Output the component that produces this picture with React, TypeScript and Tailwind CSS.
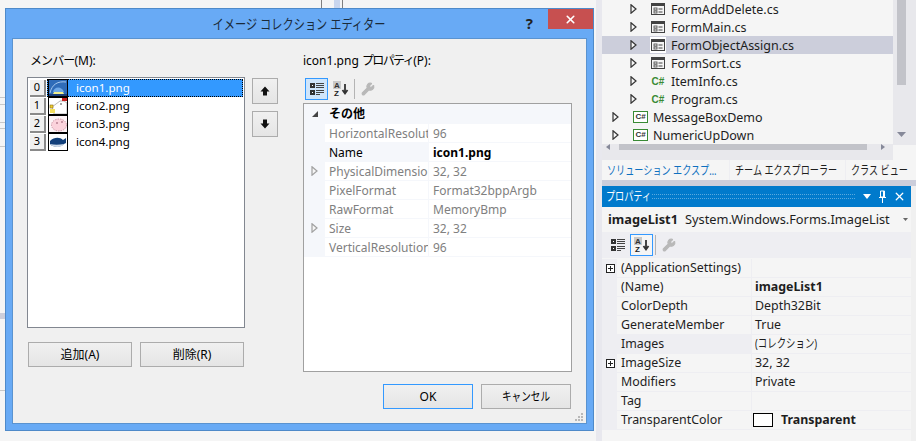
import type { ReactNode } from "react";
import { X, Wrench } from "lucide-react";

const font = { fontFamily: '"Noto Sans", "Noto Sans CJK JP", sans-serif' };

// Meiryo UI's kana are narrow, so squeeze them
function Kana({ children }: { children: ReactNode }) {
  return <span className="inline-block whitespace-nowrap origin-left scale-x-[0.76]">{children}</span>;
}

function CategoryIcon() {
  return (
    <svg width="16" height="16" viewBox="0 0 16 16">
      <rect x="1" y="2" width="5" height="5" fill="#333" />
      <rect x="3" y="4" width="1" height="1" fill="#fff" />
      <rect x="1" y="9" width="5" height="5" fill="#333" />
      <rect x="3" y="11" width="1" height="1" fill="#fff" />
      <path d="M7 2.5h8M7 4.5h8M7 6.5h8M7 9.5h8M7 11.5h8M7 13.5h4" stroke="#444" strokeWidth="1" />
    </svg>
  );
}

function SortIcon() {
  return (
    <svg width="17" height="16" viewBox="0 0 17 16">
      <rect x="1" y="0" width="8" height="8" fill="#c8c8c8" />
      <text x="2" y="7" fontSize="8" fontWeight="700" fill="#333" fontFamily="Liberation Sans">A</text>
      <text x="2" y="15" fontSize="8" fontWeight="700" fill="#222" fontFamily="Liberation Sans">Z</text>
      <path d="M13 3v9M10.5 9l2.5 3.5L15.5 9" stroke="#333" strokeWidth="1.8" fill="none" />
    </svg>
  );
}

function Toolbar({ active }: { active: "cat" | "az" }) {
  const on = "bg-[#cfe5fb] border border-[#3399ff]";
  const on2 = "bg-[#f5f5f5] border border-[#3399ff]";
  return (
    <div className="flex items-center h-[24px]">
      <div className={`w-[23px] h-[22px] flex items-center justify-center ${active === "cat" ? on : ""}`}>
        <CategoryIcon />
      </div>
      <div className={`w-[23px] h-[22px] ml-[1px] flex items-center justify-center ${active === "az" ? on2 : ""}`}>
        <SortIcon />
      </div>
      <div className="w-px h-[20px] bg-[#b4b4b4] ml-[2px]" />
      <Wrench size={14} className="ml-[6px] text-[#b8b8b8]" fill="#b8b8b8" />
    </div>
  );
}

function Arrow({ color = "#333" }: { color?: string }) {
  return (
    <svg width="7" height="10" viewBox="0 0 7 10">
      <path d="M1 .8 6 5 1 9.2Z" fill="#f5f5f5" stroke={color} strokeWidth="1.2" />
    </svg>
  );
}

function PlusBox() {
  return (
    <span className="w-[9px] h-[9px] border border-[#222] flex items-center justify-center relative bg-white">
      <span className="w-[5px] h-px bg-[#222]" />
      <span className="w-px h-[5px] bg-[#222] absolute" />
    </span>
  );
}

function Thumb({ n }: { n: number }) {
  return (
    <svg width="20" height="18" viewBox="0 0 18 16" className="border border-black shrink-0" style={{ background: n === 0 ? "#2f6cb8" : "#fff" }}>
      {n === 0 && (
        <>
          <path d="M1 13C3 4 9 1 17 2" stroke="#a5c8ee" fill="none" />
          <path d="M4 12c1-6 9-6 11 0Z" fill="#6fa8e6" />
          <path d="M5 12h9l1 2H4Z" fill="#f0ee8c" />
          <rect x="0" y="14" width="18" height="2" fill="#1c3f78" />
        </>
      )}
      {n === 1 && (
        <>
          <path d="M3 9 11 3l4 0 3 2v11H5Z" fill="#fff" stroke="#999" strokeWidth=".7" />
          <rect x="13" y="0" width="5" height="3" fill="#c62020" />
          <rect x="1" y="7" width="3" height="3" fill="#f0d030" stroke="#8a6a10" strokeWidth=".6" />
          <rect x="1" y="11" width="5" height="4" fill="#f4e060" />
          <circle cx="12" cy="6" r=".8" fill="#333" />
        </>
      )}
      {n === 2 && (
        <>
          <rect width="18" height="16" fill="#fdf3f6" />
          <ellipse cx="10" cy="9" rx="7.5" ry="6" fill="#fbd3dc" stroke="#b87a8a" strokeWidth=".7" strokeDasharray="1.5 1" />
          <circle cx="8" cy="7" r=".8" fill="#8a4a60" />
          <circle cx="13" cy="6" r=".8" fill="#8a4a60" />
        </>
      )}
      {n === 3 && (
        <>
          <path d="M1 7c4-4 10-4 13-1l3-2v5l-2 1c-2 3-11 4-14 0Z" fill="#123f7a" />
          <path d="M1 10c4 1 9 1 14 0-2 4-11 4-14 0Z" fill="#cfdae8" />
        </>
      )}
    </svg>
  );
}

function WinButton({ children, className = "border-[#acacac]" }: { children: ReactNode; className?: string }) {
  return (
    <div className={`w-[90px] h-[25px] border bg-gradient-to-b from-[#f0f0f0] to-[#e5e5e5] flex items-center justify-center text-[12px] text-black ${className}`}>
      {children}
    </div>
  );
}

function MoveButton({ down }: { down?: boolean }) {
  return (
    <div className="w-[26px] h-[26px] border border-[#acacac] bg-gradient-to-b from-[#f0f0f0] to-[#e5e5e5] flex items-center justify-center">
      <svg width="10" height="10" viewBox="0 0 10 10" className={down ? "rotate-180" : ""}>
        <path d="M5 .5 9.5 5.5H7V9.5H3V5.5H.5Z" fill="#111" />
      </svg>
    </div>
  );
}

const members = ["icon1.png", "icon2.png", "icon3.png", "icon4.png"];

function MemberList() {
  return (
    <div className="w-[218px] h-[251px] border border-[#828790] bg-white pt-[1px] pl-[1px]">
      {members.map((name, i) => (
        <div key={name} className="flex h-[18px] items-center">
          <div className="w-[16px] h-[17px] ml-[1px] bg-[#f0f0f0] border-r-2 border-b-2 border-[#8a8a8a] flex items-center justify-center text-[11px] text-black shrink-0">
            {i}
          </div>
          <div className={`flex-1 h-[18px] ml-[1px] mr-[1px] flex items-center pl-[1px] ${i === 0 ? "bg-[#3399ff] text-white outline-1 outline-dotted outline-black -outline-offset-1" : "text-black"}`}>
            <Thumb n={i} />
            <span className="ml-[8px] text-[11.6px] leading-none">{name}</span>
          </div>
        </div>
      ))}
    </div>
  );
}

const imageProps: [string, string, boolean?][] = [
  ["HorizontalResolution", "96"],
  ["Name", "icon1.png"],
  ["PhysicalDimension", "32, 32", true],
  ["PixelFormat", "Format32bppArgb"],
  ["RawFormat", "MemoryBmp"],
  ["Size", "32, 32", true],
  ["VerticalResolution", "96"],
];

function ImagePropGrid() {
  return (
    <div className="w-[269px] h-[269px] border border-[#a0a0a0] bg-white mt-[1px]">
      <div className="h-[20px] bg-[#f5f7fb] flex items-center text-[12px] font-bold text-black">
        <svg width="6" height="6" viewBox="0 0 6 6" className="ml-[8px]">
          <path d="M6 0V6H0Z" fill="#444" />
        </svg>
        <span className="ml-[11px]">その他</span>
      </div>
      {imageProps.map(([k, v, expand]) => {
        const isName = k === "Name";
        return (
          <div key={k} className="h-[19px] flex border-b border-[#f5f7fb] text-[12px] leading-[20px]">
            <div className="w-[21px] bg-[#f5f7fb] flex items-center justify-center shrink-0">
              {expand && <Arrow color="#a0a0a0" />}
            </div>
            <div className={`w-[104px] overflow-hidden whitespace-nowrap pl-[4px] border-r border-[#f5f7fb] ${isName ? "bg-[#f5f7fb] text-black" : "text-[#808080]"}`}>
              {k}
            </div>
            <div className={`pl-[4px] ${isName ? "font-bold text-black" : "text-[#808080]"}`}>{v}</div>
          </div>
        );
      })}
    </div>
  );
}

function ResizeGrip() {
  return (
    <svg width="9" height="9" viewBox="0 0 9 9" className="absolute right-[2px] bottom-[1px]">
      <path d="M6 0h2v2H6ZM3 3h2v2H3ZM6 3h2v2H6ZM0 6h2v2H0ZM3 6h2v2H3ZM6 6h2v2H6Z" fill="#b8b8b8" />
    </svg>
  );
}

function Dialog() {
  return (
    <div className="absolute left-[5px] top-[8px] w-[589px] h-[423px] border border-[#4f8ac9] bg-[#68aaf5] flex flex-col px-[6px] pb-[6px]">
      <div className="h-[29px] relative flex items-center justify-center text-[14px] text-[#1a2a3a] shrink-0">
        <span className="inline-block whitespace-nowrap scale-x-[0.8]">イメージ コレクション エディター</span>
        <span className="absolute right-[54px] top-[3px] text-[15px] font-bold text-[#222]">?</span>
        <div className="absolute -right-[6px] top-0 w-[45px] h-[20px] bg-[#c75050] flex items-center justify-center">
          <X size={13} strokeWidth={3} className="text-white" />
        </div>
      </div>
      <div className="flex-1 relative border border-[#5a93d0] bg-[#f0f0f0] flex pl-[14px] pt-[14px]">
        <div className="w-[218px] shrink-0">
          <div className="h-[24px] pl-[3px] text-[12px] leading-[16px] text-black">
            <span className="tracking-[-0.9px]">メンバー</span>(M):
          </div>
          <MemberList />
          <div className="flex mt-[14px] pl-[1px] gap-[8px]">
            <WinButton className="w-[104px] border-[#acacac]">追加(A)</WinButton>
            <WinButton className="w-[104px] border-[#acacac]">削除(R)</WinButton>
          </div>
        </div>
        <div className="ml-[7px] w-[26px] shrink-0 pt-[25px] flex flex-col gap-[7px]">
          <MoveButton />
          <MoveButton down />
        </div>
        <div className="ml-[25px] w-[269px] shrink-0">
          <div className="h-[24px] text-[12px] leading-[16px] text-black">
            icon1.png <span className="tracking-[-1.6px]">プロパティ</span>(P):
          </div>
          <div className="pl-[2px]">
            <Toolbar active="cat" />
          </div>
          <div className="pt-px">
            <ImagePropGrid />
          </div>
          <div className="flex justify-end gap-[8px] mt-[12px] pr-[1px]">
            <WinButton className="border-[#3399ff]">OK</WinButton>
            <WinButton>
              <span className="inline-block whitespace-nowrap scale-x-[0.8]">キャンセル</span>
            </WinButton>
          </div>
        </div>
        <ResizeGrip />
      </div>
    </div>
  );
}

function FormIcon() {
  return (
    <svg width="14" height="12" viewBox="0 0 14 12">
      <rect x=".5" y=".5" width="13" height="11" fill="#f5f5f5" stroke="#424242" />
      <rect x="1" y="1" width="12" height="2" fill="#424242" />
      <rect x="3" y="5" width="3" height="2" fill="none" stroke="#424242" strokeWidth=".8" />
      <rect x="3" y="8" width="3" height="2" fill="none" stroke="#424242" strokeWidth=".8" />
      <path d="M7.5 6h4M7.5 9h4" stroke="#424242" />
    </svg>
  );
}

const tree: { name: string; kind: "form" | "cs" | "proj"; selected?: boolean }[] = [
  { name: "FormAddDelete.cs", kind: "form" },
  { name: "FormMain.cs", kind: "form" },
  { name: "FormObjectAssign.cs", kind: "form", selected: true },
  { name: "FormSort.cs", kind: "form" },
  { name: "ItemInfo.cs", kind: "cs" },
  { name: "Program.cs", kind: "cs" },
  { name: "MessageBoxDemo", kind: "proj" },
  { name: "NumericUpDown", kind: "proj" },
];

function SolutionTree() {
  return (
    <div className="flex h-[160px]">
      <div className="w-[291px] shrink-0 bg-[#f5f5f5] h-full flex flex-col">
        <div className="flex-1 overflow-hidden">
          {tree.map((t) => (
            <div key={t.name} className={`h-[18px] flex items-center text-[12.5px] text-[#1e1e1e] ${t.selected ? "bg-[#cccedb]" : ""} ${t.kind === "proj" ? "pl-[10px]" : "pl-[28px]"}`}>
              <Arrow />
              {t.kind === "form" && (
                <span className={`ml-[13px] w-[16px] h-[16px] flex items-center justify-center ${t.selected ? "bg-white" : ""}`}>
                  <FormIcon />
                </span>
              )}
              {t.kind === "cs" && (
                <span className="ml-[13px] w-[16px] h-[16px] flex items-center justify-center text-[10px] font-bold text-[#388a34]" style={{ fontFamily: "Liberation Sans" }}>
                  C#
                </span>
              )}
              {t.kind === "proj" && (
                <span className="ml-[14px] w-[15px] h-[12px] border border-[#388a34] flex items-center justify-center text-[8px] font-bold text-[#333] bg-white" style={{ fontFamily: "Liberation Sans" }}>
                  C#
                </span>
              )}
              <span className="pt-[2px] ml-[5px]">{t.name}</span>
            </div>
          ))}
        </div>
        <div className="h-[16px] bg-[#e8e8ec] flex items-start pl-[4px]">
          <div className="h-[6px] flex items-center w-full">
            <svg width="4" height="6" viewBox="0 0 4 6"><path d="M4 0V6L0 3Z" fill="#868999" /></svg>
            <div className="ml-[9px] w-[248px] h-[6px] bg-[#c2c3c9]" />
            <svg width="4" height="6" viewBox="0 0 4 6" className="ml-[14px]"><path d="M0 0V6L4 3Z" fill="#868999" /></svg>
          </div>
        </div>
      </div>
      <div className="flex-1 bg-[#e8e8ec] h-[145px] relative">
        <div className="ml-[4px] w-[9px] h-[85px] bg-[#c2c3c9]" />
        <svg width="9" height="5" viewBox="0 0 9 5" className="absolute left-[4px] top-[132px]"><path d="M0 0H9L4.5 5Z" fill="#868999" /></svg>
      </div>
    </div>
  );
}

const settings: [string, string, "plus"?, "bold"?][] = [
  ["(ApplicationSettings)", "", "plus"],
  ["(Name)", "imageList1", undefined, "bold"],
  ["ColorDepth", "Depth32Bit"],
  ["GenerateMember", "True"],
  ["Images", "(コレクション)"],
  ["ImageSize", "32, 32", "plus"],
  ["Modifiers", "Private"],
  ["Tag", ""],
];

function SettingRow({ name, children, plus, hot }: { name: string; children?: ReactNode; plus?: boolean; hot?: boolean }) {
  return (
    <div className="h-[19px] flex text-[12.4px] leading-[18px] text-[#1e1e1e]">
      <div className="w-[15px] shrink-0 bg-[#eeeef2] flex items-center pl-[4px]">{plus && <PlusBox />}</div>
      <div className={`w-[135px] shrink-0 pl-[4px] border-r border-b border-[#eeeef2] ${hot ? "bg-[#eeeef2]" : ""}`}>{name}</div>
      <div className="flex-1 pl-[3px] border-b border-[#eeeef2] flex items-center h-[19px] pb-px">{children}</div>
    </div>
  );
}

function PropertiesPanel() {
  return (
    <div className="h-[255px] flex flex-col pr-[5px] bg-[#f0f0f0]">
      <div className="h-[21px] bg-[#007acc] flex items-center text-white text-[12px] pl-[4px] pr-[5px] shrink-0">
        <span className="w-[46px] shrink-0"><Kana>プロパティ</Kana></span>
        <div className="flex-1 h-[5px] mr-[8px] border-y border-dotted border-[#5aa9de]" />
        <svg width="8" height="5" viewBox="0 0 8 5"><path d="M0 0H8L4 5Z" fill="#fff" /></svg>
        <svg width="9" height="13" viewBox="0 0 9 13" className="ml-[7px]">
          <path d="M2.5 1h4v6h-4ZM1 7.5h7M4.5 8v5M5.5 1v6" stroke="#fff" fill="none" />
        </svg>
        <X size={13} strokeWidth={2.4} className="ml-[6px]" />
      </div>
      <div className="h-[25px] bg-[#f5f5f5] flex items-center text-[12.8px] pl-[6px] pr-[3px] text-[#1e1e1e] shrink-0 whitespace-nowrap">
        <span className="font-bold mr-[7px]">imageList1</span>
        <span>System.Windows.Forms.ImageList</span>
        <svg width="5" height="3" viewBox="0 0 5 3" className="ml-auto"><path d="M0 0H5L2.5 3Z" fill="#666" /></svg>
      </div>
      <div className="bg-[#eeeef2] pl-[4px] h-[26px] flex items-center shrink-0">
        <Toolbar active="az" />
      </div>
      <div className="flex-1 bg-[#f5f5f5] pt-px">
        {settings.map(([k, v, plus, bold]) => (
          <SettingRow key={k} name={k} plus={plus === "plus"} hot={k === "Images"}>
            {k === "Images" ? <Kana>{v}</Kana> : <span className={bold ? "font-bold" : ""}>{v}</span>}
          </SettingRow>
        ))}
        <SettingRow name="TransparentColor">
          <span className="w-[20px] h-[14px] -ml-[2px] border border-black bg-white shrink-0" />
          <span className="ml-[8px] font-bold">Transparent</span>
        </SettingRow>
      </div>
    </div>
  );
}

function SidePanels() {
  return (
    <div className="w-[314px] shrink-0 h-[441px] flex flex-col">
      <SolutionTree />
      <div className="h-[20px] flex text-[12px] leading-[21px] text-[#1e1e1e] shrink-0 pr-[7px] bg-[#eeeef2]">
        <div className="w-[127px] bg-[#f5f5f5] text-[#0e70c0] pl-[5px]"><Kana>ソリューション エクスプ…</Kana></div>
        <div className="w-[115px] ml-px pl-[5px] bg-[#f5f5f5]"><Kana>チーム エクスプローラー</Kana></div>
        <div className="flex-1 ml-px pl-[5px] bg-[#f5f5f5]"><Kana>クラス ビュー</Kana></div>
      </div>
      <div className="h-[6px] bg-[#cccedb] shrink-0" />
      <PropertiesPanel />
    </div>
  );
}

export default function App() {
  return (
    <div className="w-[916px] h-[441px] relative overflow-hidden flex bg-[#f5f5f5]" style={font}>
      <div className="w-[602px] shrink-0 flex">
        <div className="w-[594px] relative">
          <div className="h-[8px] flex">
            <div className="ml-[321px] w-px h-full bg-[#808080]" />
            <div className="ml-[12px] w-[6px] h-full bg-[#c9d6ee]" />
            <div className="ml-[2px] w-px h-full bg-[#808080]" />
          </div>
          <div className="w-[5px] mt-[89px] h-[56px] flex flex-col gap-[5px]">
            <div className="h-px bg-[#c8c8c8]" />
            <div className="h-px mt-[1px] bg-[#c8c8c8]" />
            <div className="h-px mt-[12px] bg-[#c8c8c8]" />
            <div className="h-px bg-[#c8c8c8]" />
            <div className="h-px mt-[12px] bg-[#c8c8c8]" />
          </div>
          <div className="w-[5px] mt-[160px] h-[6px] bg-[#cccedb]" />
          <div className="w-[5px] mt-[71px] h-px bg-[#c8c8c8]" />
        </div>
        <div className="flex-1 bg-[#e8e8ee] ml-[2px]" />
      </div>
      <SidePanels />
      <Dialog />
    </div>
  );
}
